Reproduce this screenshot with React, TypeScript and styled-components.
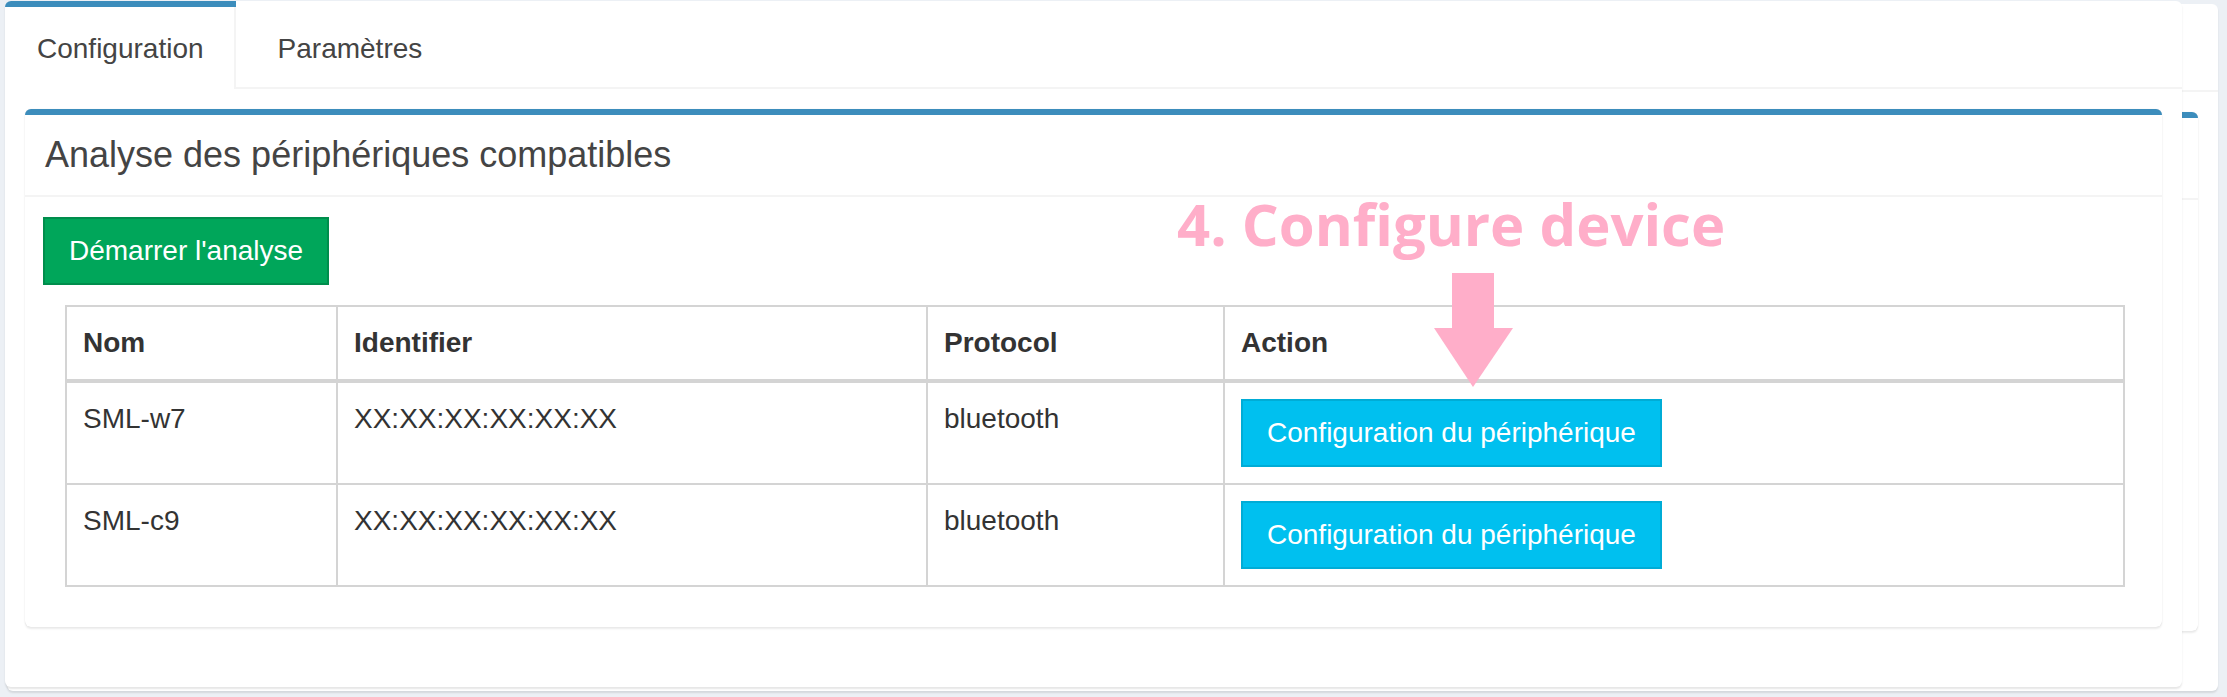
import React from "react";
import styled, { createGlobalStyle } from "styled-components";

const GlobalStyle = createGlobalStyle`
  html, body {
    margin: 0;
    padding: 0;
    background: #ecf0f5;
  }
  body {
    font-family: "Liberation Sans", Arial, Helvetica, sans-serif;
    font-size: 28px;
    color: #333;
  }
  *, *::before, *::after { box-sizing: border-box; }
`;

const Stage = styled.div`
  position: relative;
  display: grid;
  width: 2227px;
  height: 697px;
  padding: 1px 0 0 5px;
  overflow: hidden;
`;

const Layer = styled.section<{ $width: number; $top: number; $left: number }>`
  grid-area: 1 / 1;
  align-self: start;
  width: ${(p) => p.$width}px;
  margin-top: ${(p) => p.$top}px;
  margin-left: ${(p) => p.$left}px;
  background: #fff;
  border-radius: 6px;
  box-shadow: 0 2px 2px rgba(0, 0, 0, 0.1);
`;

const TabStrip = styled.ul`
  display: flex;
  align-items: flex-start;
  height: 88px;
  margin: 0;
  padding: 0;
  list-style: none;
  border-bottom: 2px solid #f4f4f4;
`;

const Tab = styled.li<{ $active?: boolean }>`
  margin-right: 10px;
  margin-bottom: ${(p) => (p.$active ? "-2px" : "0")};
  border-top: 6px solid ${(p) => (p.$active ? "#3c8dbc" : "transparent")};
  border-top-left-radius: ${(p) => (p.$active ? "6px" : "0")};
  background: ${(p) => (p.$active ? "#fff" : "transparent")};
`;

const TabLink = styled.a<{ $active?: boolean }>`
  display: block;
  height: ${(p) => (p.$active ? "82px" : "80px")};
  padding: 22px 30px 18px;
  line-height: 40px;
  font-size: 28px;
  color: #444;
  text-decoration: none;
  border-left: 2px solid transparent;
  border-right: 2px solid ${(p) => (p.$active ? "#f4f4f4" : "transparent")};
`;

const TabContent = styled.div`
  padding: 20px 20px 60px;
`;

const Box = styled.div`
  background: #fff;
  border-top: 6px solid #3c8dbc;
  border-radius: 6px;
  box-shadow: 0 0 1px rgba(0, 0, 0, 0.12), 0 2px 2px rgba(0, 0, 0, 0.08);
`;

const BoxHeader = styled.div`
  height: 82px;
  padding: 20px;
  border-bottom: 2px solid #f4f4f4;
`;

const BoxTitle = styled.h3`
  margin: 0;
  font-size: 36px;
  line-height: 1.1;
  font-weight: 400;
  color: #444;
`;

const BoxBody = styled.div<{ $height?: number }>`
  padding: 20px 20px 20px 18px;
  ${(p) => (p.$height ? `height: ${p.$height}px;` : "")}
`;

const Button = styled.button<{ $variant: "success" | "info" }>`
  display: inline-block;
  margin: 0;
  padding: 12px 24px;
  font-family: inherit;
  font-size: 28px;
  line-height: 40px;
  color: #fff;
  border-radius: 0;
  border: 2px solid ${(p) => (p.$variant === "success" ? "#008d4c" : "#00acd6")};
  background: ${(p) => (p.$variant === "success" ? "#00a65a" : "#00c0ef")};
  cursor: pointer;
`;

const Table = styled.table`
  width: calc(100% - 39px);
  margin: 20px 17px 20px 22px;
  border-collapse: collapse;
  table-layout: fixed;
  border: 2px solid #d4d4d4;
`;

const Col = styled.col<{ $w?: number }>`
  ${(p) => (p.$w ? `width: ${p.$w}px;` : "")}
`;

const Th = styled.th`
  padding: 16px;
  line-height: 40px;
  text-align: left;
  vertical-align: bottom;
  font-weight: 700;
  color: #333;
  border: 2px solid #d4d4d4;
  border-bottom-width: 4px;
`;

const Td = styled.td`
  padding: 16px;
  line-height: 40px;
  vertical-align: top;
  color: #333;
  border: 2px solid #d4d4d4;
`;

const Annotation = styled.div`
  position: absolute;
  left: 1177px;
  top: 195px;
  display: flex;
  flex-direction: column;
  pointer-events: none;
`;

const AnnotationText = styled.div`
  font-family: "Open Sans", "Liberation Sans", sans-serif;
  font-weight: 700;
  font-size: 58px;
  line-height: 58px;
  color: #ffaec9;
  white-space: nowrap;
`;

const ArrowSvg = styled.svg`
  display: block;
  margin-top: 20px;
  margin-left: 257px;
`;

const devices = [
  { name: "SML-w7", id: "XX:XX:XX:XX:XX:XX", protocol: "bluetooth" },
  { name: "SML-c9", id: "XX:XX:XX:XX:XX:XX", protocol: "bluetooth" },
];

export default function App() {
  return (
    <>
      <GlobalStyle />
      <Stage>
        <Layer $width={2211} $top={3} $left={2} aria-hidden="true">
          <TabStrip />
          <TabContent>
            <Box>
              <BoxHeader />
              <BoxBody $height={431} />
            </Box>
          </TabContent>
        </Layer>

        <Layer $width={2177} $top={0} $left={0}>
          <TabStrip>
            <Tab $active>
              <TabLink $active>Configuration</TabLink>
            </Tab>
            <Tab>
              <TabLink>Paramètres</TabLink>
            </Tab>
          </TabStrip>
          <TabContent>
            <Box>
              <BoxHeader>
                <BoxTitle>Analyse des périphériques compatibles</BoxTitle>
              </BoxHeader>
              <BoxBody>
                <Button $variant="success">Démarrer l'analyse</Button>
                <Table>
                  <colgroup>
                    <Col $w={271} />
                    <Col $w={590} />
                    <Col $w={297} />
                    <Col />
                  </colgroup>
                  <thead>
                    <tr>
                      <Th>Nom</Th>
                      <Th>Identifier</Th>
                      <Th>Protocol</Th>
                      <Th>Action</Th>
                    </tr>
                  </thead>
                  <tbody>
                    {devices.map((d) => (
                      <tr key={d.name}>
                        <Td>{d.name}</Td>
                        <Td>{d.id}</Td>
                        <Td>{d.protocol}</Td>
                        <Td>
                          <Button $variant="info">Configuration du périphérique</Button>
                        </Td>
                      </tr>
                    ))}
                  </tbody>
                </Table>
              </BoxBody>
            </Box>
          </TabContent>
        </Layer>

        <Annotation>
          <AnnotationText>4. Configure device</AnnotationText>
          <ArrowSvg width="80" height="115" viewBox="0 0 80 115">
            <rect x="18" y="0" width="42" height="56" fill="#ffaec9" />
            <polygon points="0,55 79,55 39,114" fill="#ffaec9" />
          </ArrowSvg>
        </Annotation>
      </Stage>
    </>
  );
}
